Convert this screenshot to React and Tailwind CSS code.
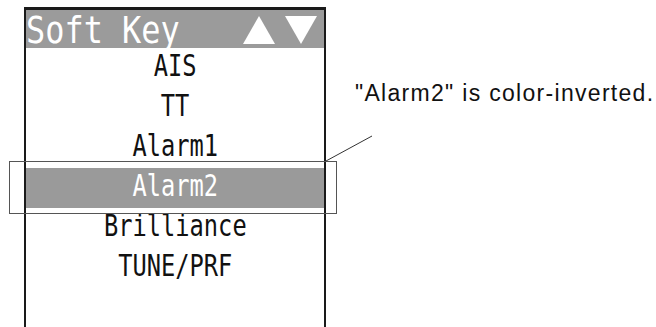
import React from "react";

const items = ["AIS", "TT", "Alarm1", "Alarm2", "Brilliance", "TUNE/PRF"];

const mono = { fontFamily: '"DejaVu Sans Mono", "Liberation Mono", monospace' };

const Item = ({ label, active }) => (
  <div
    className={`h-[40px] flex justify-center pt-[3px] ${
      active ? "bg-[#9a9a9a] text-white" : "text-[#111]"
    }`}
  >
    <span
      className="inline-block text-[30px] leading-none scale-x-[0.79] whitespace-nowrap"
      style={mono}
    >
      {label}
    </span>
  </div>
);

export default function App() {
  return (
    <div className="relative w-[656px] h-[327px] bg-white overflow-hidden">
      <div className="flex items-start">
        {/* soft key panel */}
        <div className="ml-[24px] mt-[7px] w-[302px] h-[330px] border-x-2 border-t-[3px] border-[#1a1a1a]">
          <div className="h-[38px] bg-[#9b9b9b] flex items-start justify-between pt-[1px]">
            <span
              className="inline-block text-white text-[38px] leading-none origin-left scale-x-[0.84] font-light whitespace-nowrap"
              style={mono}
            >
              Soft Key
            </span>
            <svg width="76" height="30" viewBox="0 0 76 30" className="mt-[4px] mr-[6px]">
              <polygon points="1,29 17,1 33,29" fill="white" />
              <polygon points="43,1 75,1 59,29" fill="white" />
            </svg>
          </div>
          <div>
            {items.map((it) => (
              <Item key={it} label={it} active={it === "Alarm2"} />
            ))}
          </div>
        </div>

        <p
          className="ml-[29px] mt-[82px] text-[23px] leading-none tracking-[1.3px] text-[#111] whitespace-nowrap"
          style={{ fontFamily: '"Liberation Sans", Arial, sans-serif' }}
        >
          "Alarm2" is color-inverted.
        </p>
      </div>

      {/* callout frame around the inverted row */}
      <div className="absolute left-[9px] top-[161px] w-[328px] h-[53px] border border-[#555]" />
      <svg className="absolute left-0 top-0" width="656" height="327">
        <line x1="326" y1="161" x2="372" y2="136" stroke="#333" strokeWidth="1" />
      </svg>
    </div>
  );
}
